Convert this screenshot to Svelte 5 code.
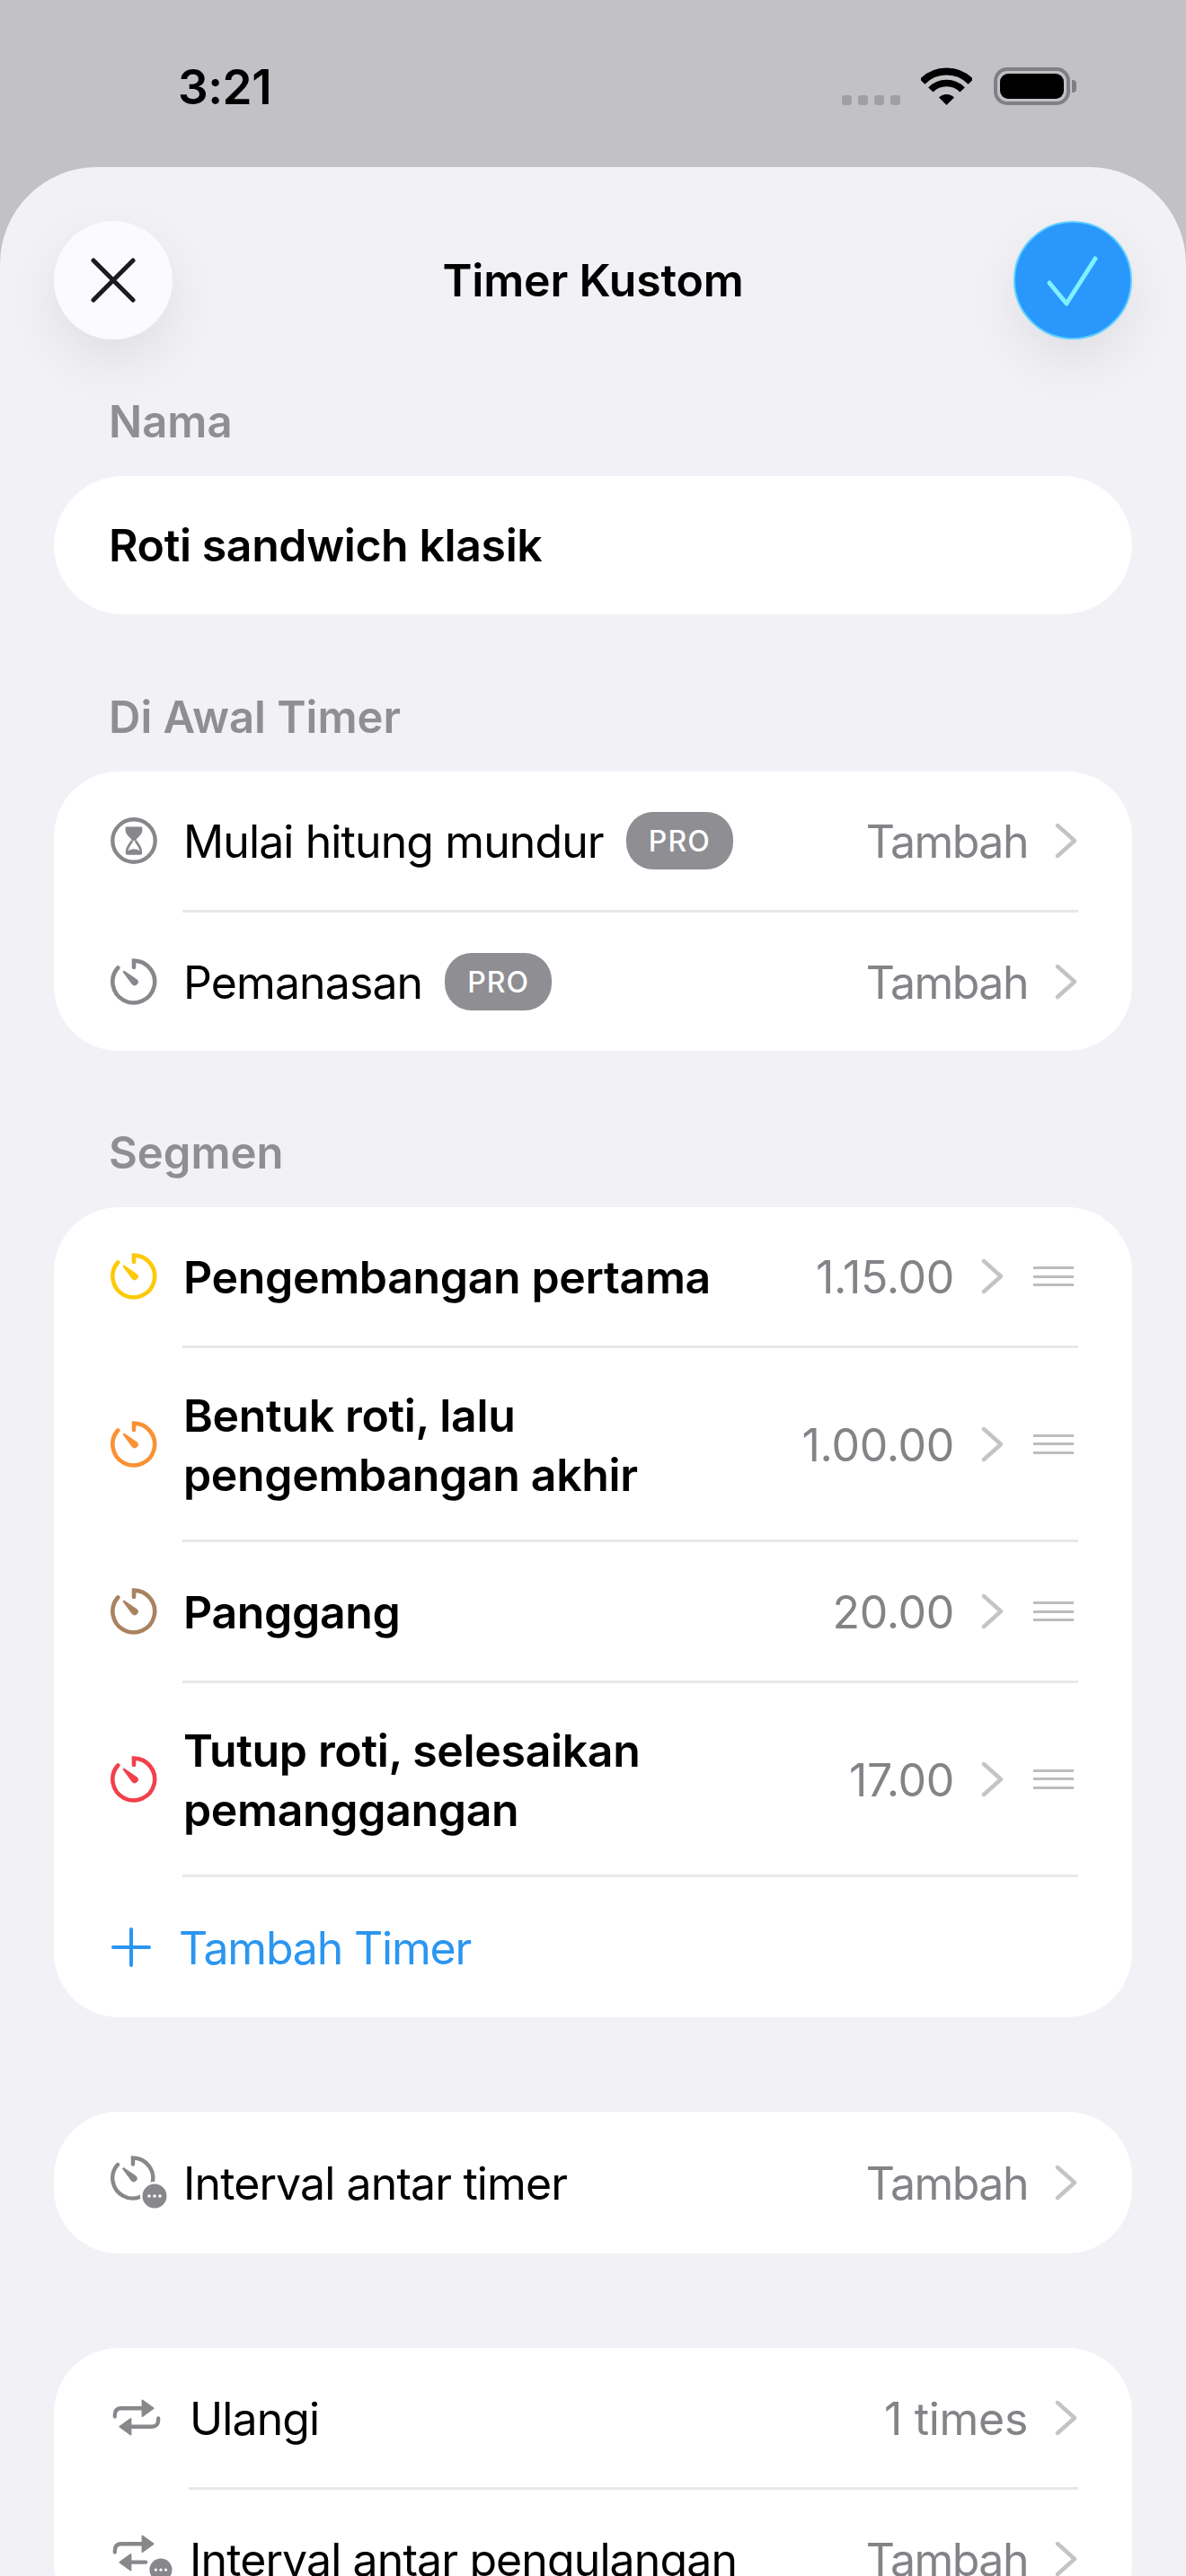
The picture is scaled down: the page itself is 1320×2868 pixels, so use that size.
<script lang="ts">
	const segments = [
		{ title: ['Pengembangan pertama'], time: '1.15.00', color: '#fdc908', tall: false },
		{ title: ['Bentuk roti, lalu', 'pengembangan akhir'], time: '1.00.00', color: '#fb9133', tall: true },
		{ title: ['Panggang'], time: '20.00', color: '#a9835f', tall: false },
		{ title: ['Tutup roti, selesaikan', 'pemanggangan'], time: '17.00', color: '#f2404a', tall: true }
	];

	const grey = '#88888c';
	const timerArc = 'M25 9.5V2.5A22.5 22.5 0 1 1 8 10';
	const timerHand = 'M13 14.5L14.5 13L28.5 22.5A3.8 3.8 0 0 1 23 28Z';
</script>

{#snippet timer(color)}
	<svg class="icon" viewBox="0 0 50 50" style="color: {color}">
		<path d={timerArc} fill="none" stroke="currentColor" stroke-width="4.4" stroke-linecap="round" />
		<path d={timerHand} fill="currentColor" />
	</svg>
{/snippet}

{#snippet dots(cx, cy)}
	<circle {cx} {cy} r="16" fill="#fff" />
	<circle {cx} {cy} r="13.5" fill={grey} />
	<circle cx={cx - 6} {cy} r="1.8" fill="#fff" />
	<circle {cx} {cy} r="1.8" fill="#fff" />
	<circle cx={cx + 6} {cy} r="1.8" fill="#fff" />
{/snippet}

{#snippet chevron()}
	<svg class="chevron" viewBox="0 0 26 40">
		<path d="M3 3L22 20L3 37" fill="none" stroke="#c4c4c7" stroke-width="4.4" stroke-linecap="round" stroke-linejoin="round" />
	</svg>
{/snippet}

{#snippet pro()}
	<span class="pro">PRO</span>
{/snippet}

<div class="screen">
	<div class="status">
		<span class="time">3:21</span>
		<div class="indicators">
			<div class="signal"><i></i><i></i><i></i><i></i></div>
			<svg class="wifi" viewBox="0 0 57 42">
				<path d="M1.5 16A37.5 37.5 0 0 1 55.5 16" fill="none" stroke="#000" stroke-width="8" />
				<path d="M10.9 25A24.5 24.5 0 0 1 46.1 25" fill="none" stroke="#000" stroke-width="7.5" />
				<path d="M28.5 42L20 33.5A12 12 0 0 1 37 33.5Z" fill="#000" />
			</svg>
			<div class="battery"><div class="cell"></div></div>
			<div class="nub"></div>
		</div>
	</div>

	<div class="sheet">
		<header>
			<button class="round close" aria-label="Tutup">
				<svg viewBox="0 0 50 50">
					<path d="M3 3L47 47M47 3L3 47" fill="none" stroke="#1c1c1e" stroke-width="5" stroke-linecap="round" />
				</svg>
			</button>
			<h1>Timer Kustom</h1>
			<button class="round done" aria-label="Simpan">
				<svg viewBox="0 0 132 132">
					<path d="M40 69L59 92L91 42" fill="none" stroke="#80f0ff" stroke-width="5" stroke-linecap="round" stroke-linejoin="round" />
				</svg>
			</button>
		</header>

		<div class="label first">Nama</div>
		<div class="name">Roti sandwich klasik</div>

		<div class="label after-name">Di Awal Timer</div>
		<section class="card">
			<div class="row">
				<svg class="icon" viewBox="0 0 50 50">
					<circle cx="25" cy="25" r="22.8" fill="none" stroke={grey} stroke-width="4.2" />
					<path d="M16 11Q16 10 17 10H33Q34 10 34 11V14C34 19 28 22 27 25H23C22 22 16 19 16 14Z" fill={grey} />
					<path d="M23 25C22 28 17.5 31 17.5 37V38.5H32.5V37C32.5 31 28 28 27 25" fill="none" stroke={grey} stroke-width="2.6" stroke-linejoin="round" />
					<path d="M17 37Q25 31 33 37V39Q33 40 32 40H18Q17 40 17 39Z" fill={grey} />
				</svg>
				<span class="text">Mulai hitung mundur</span>
				{@render pro()}
				<span class="value word">Tambah</span>
				{@render chevron()}
			</div>
			<div class="sep"></div>
			<div class="row">
				{@render timer(grey)}
				<span class="text">Pemanasan</span>
				{@render pro()}
				<span class="value word">Tambah</span>
				{@render chevron()}
			</div>
		</section>

		<div class="label">Segmen</div>
		<section class="card">
			{#each segments as seg}
				<div class="row" class:tall={seg.tall}>
					{@render timer(seg.color)}
					<span class="text strong">
						{#each seg.title as line}
							<span class="line">{line}</span>
						{/each}
					</span>
					<span class="value">{seg.time}</span>
					{@render chevron()}
					<div class="handle"><i></i><i></i><i></i></div>
				</div>
				<div class="sep"></div>
			{/each}
			<div class="row add">
				<svg class="plus" viewBox="0 0 44 44">
					<path d="M22 2V42M2 22H42" fill="none" stroke="#2b96f0" stroke-width="4" stroke-linecap="round" />
				</svg>
				<span class="text">Tambah Timer</span>
			</div>
		</section>

		<section class="card loose single">
			<div class="row">
				<svg class="icon wide" viewBox="0 0 66 60">
					<path d={timerArc} fill="none" stroke={grey} stroke-width="4.4" stroke-linecap="round" />
					<path d={timerHand} fill={grey} />
					{@render dots(49, 45)}
				</svg>
				<span class="text">Interval antar timer</span>
				<span class="value word">Tambah</span>
				{@render chevron()}
			</div>
		</section>

		<section class="card loose">
			<div class="row repeat">
				<svg class="icon arrows" viewBox="0 0 58 44">
					<path d="M3 21V19Q3 11 11 11H38" fill="none" stroke={grey} stroke-width="4.6" stroke-linecap="round" />
					<path d="M36 1.5L49 11L36 20.5Z" fill={grey} stroke={grey} stroke-width="2" stroke-linejoin="round" />
					<path d="M55 23V25Q55 33 47 33H20" fill="none" stroke={grey} stroke-width="4.6" stroke-linecap="round" />
					<path d="M22 23.5L9 33L22 42.5Z" fill={grey} stroke={grey} stroke-width="2" stroke-linejoin="round" />
				</svg>
				<span class="text">Ulangi</span>
				<span class="value">1 times</span>
				{@render chevron()}
			</div>
			<div class="sep wider"></div>
			<div class="row">
				<svg class="icon arrows badge" viewBox="0 0 72 58">
					<path d="M3 21V19Q3 11 11 11H38" fill="none" stroke={grey} stroke-width="4.6" stroke-linecap="round" />
					<path d="M36 1.5L49 11L36 20.5Z" fill={grey} stroke={grey} stroke-width="2" stroke-linejoin="round" />
					<path d="M20 33H40" fill="none" stroke={grey} stroke-width="4.6" stroke-linecap="round" />
					<path d="M22 23.5L9 33L22 42.5Z" fill={grey} stroke={grey} stroke-width="2" stroke-linejoin="round" />
					{@render dots(58, 42)}
				</svg>
				<span class="text">Interval antar pengulangan</span>
				<span class="value word">Tambah</span>
				{@render chevron()}
			</div>
		</section>
	</div>
</div>

<style>
	:global(body) {
		background: #c2c1c6;
	}

	.screen {
		height: 2868px;
		overflow: hidden;
		background: #c2c1c6;
		font-family: Inter, 'Liberation Sans', sans-serif;
		color: #000;
	}

	.status {
		height: 186px;
		display: flex;
		justify-content: space-between;
		padding: 0 122px 0 198px;
		box-sizing: border-box;
	}

	.time {
		margin-top: 64px;
		font-size: 53px;
		line-height: 66px;
		font-weight: 600;
		letter-spacing: -0.5px;
	}

	.indicators {
		margin-top: 75px;
		height: 42px;
		display: flex;
		align-items: flex-end;
	}

	.signal {
		display: flex;
		gap: 7px;
		margin-right: 23px;
	}

	.signal i {
		width: 11px;
		height: 11px;
		border-radius: 3px;
		background: #a0a0a3;
	}

	.wifi {
		width: 57px;
		height: 42px;
		margin-right: 24px;
	}

	.battery {
		width: 85px;
		height: 42px;
		box-sizing: border-box;
		border: 4px solid #808084;
		border-radius: 15px;
		padding: 3px;
	}

	.cell {
		height: 100%;
		background: #000;
		border-radius: 9px;
	}

	.nub {
		width: 5px;
		height: 14px;
		margin: 0 0 14px 2px;
		background: #808084;
		border-radius: 0 4px 4px 0;
	}

	.sheet {
		height: 2682px;
		background: #f1f1f6;
		border-radius: 108px 108px 0 0;
		padding: 60px 60px 0;
		box-sizing: border-box;
	}

	header {
		display: flex;
		align-items: center;
		justify-content: space-between;
	}

	h1 {
		margin: 0;
		font-size: 50px;
		line-height: 60px;
		font-weight: 600;
		letter-spacing: -0.2px;
	}

	.round {
		width: 132px;
		height: 132px;
		padding: 0;
		border: none;
		border-radius: 50%;
		display: flex;
		align-items: center;
		justify-content: center;
		box-shadow: 0 24px 60px rgba(0, 0, 0, 0.08);
	}

	.close {
		background: #fbfbfd;
	}

	.close svg {
		width: 50px;
		height: 50px;
	}

	.done {
		background: #2997fb;
		border: 2px solid #5cd0ff;
		box-sizing: border-box;
	}

	.done svg {
		width: 132px;
		height: 132px;
		flex: none;
	}

	.label {
		margin: 84px 0 30px 61px;
		font-size: 49px;
		line-height: 60px;
		font-weight: 600;
		color: #8e8e93;
	}

	.label.first {
		margin-top: 62px;
	}

	.label.after-name {
		margin-top: 85px;
	}

	.name {
		height: 154px;
		border-radius: 77px;
		background: #fff;
		padding-left: 61px;
		display: flex;
		align-items: center;
		font-size: 50px;
		font-weight: 600;
		letter-spacing: -0.4px;
	}

	.card {
		background: #fff;
		border-radius: 72px;
		overflow: hidden;
	}

	.card.loose {
		margin-top: 105px;
	}

	.card.single .row {
		height: 158px;
	}

	.row {
		height: 154px;
		display: flex;
		align-items: center;
		padding: 0 60px 0 61px;
	}

	.row.tall {
		height: 213px;
	}

	.row.repeat {
		height: 155px;
	}

	.row.add {
		height: 156px;
		color: #2b96f0;
	}

	.icon {
		width: 52px;
		height: 52px;
		flex: none;
		margin: 0 29px 0 2px;
	}

	.icon.wide {
		width: 66px;
		height: 60px;
		margin: 0 15px 0 2px;
	}

	.icon.arrows {
		width: 54px;
		height: 41px;
		margin: 0 32px 0 4px;
	}

	.icon.arrows.badge {
		width: 67px;
		height: 54px;
		margin: 0 19px 0 4px;
	}

	.text {
		font-size: 50px;
		line-height: 66px;
		letter-spacing: -0.9px;
		padding-top: 2px;
	}

	.text.strong {
		font-weight: 600;
		letter-spacing: -0.35px;
	}

	.line {
		display: block;
	}

	.pro {
		margin-left: 25px;
		width: 119px;
		height: 64px;
		border-radius: 30px;
		background: #8e8e93;
		color: #fff;
		font-size: 32px;
		font-weight: 500;
		letter-spacing: 1px;
		display: flex;
		align-items: center;
		justify-content: center;
	}

	.value {
		margin-left: auto;
		font-size: 50px;
		line-height: 66px;
		padding-top: 2px;
		letter-spacing: -0.3px;
		color: #838388;
	}

	.value.word {
		letter-spacing: -1.5px;
	}

	.chevron {
		width: 26px;
		height: 40px;
		flex: none;
		margin-left: 30px;
	}

	.handle {
		width: 45px;
		margin-left: 32px;
		margin-right: 5px;
		display: flex;
		flex-direction: column;
		gap: 6.5px;
	}

	.handle i {
		height: 3px;
		background: #bdbdc0;
	}

	.sep {
		height: 3px;
		margin: 0 60px 0 143px;
		background: #e8e8ec;
	}

	.sep.wider {
		margin-left: 150px;
	}

	.add .text {
		letter-spacing: -1.2px;
	}

	.plus {
		width: 44px;
		height: 44px;
		margin: 0 31px 0 3px;
	}
</style>
